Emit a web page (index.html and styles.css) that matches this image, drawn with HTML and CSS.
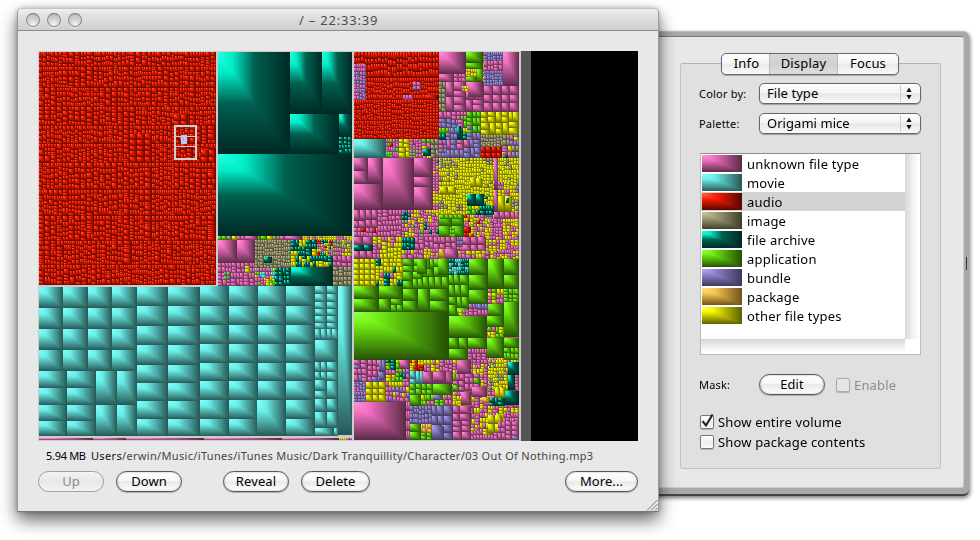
FILE: index.html
```html
<!DOCTYPE html>
<html lang="en">
<head>
<meta charset="utf-8">
<title>/ – 22:33:39</title>
<link rel="stylesheet" href="styles.css">
</head>
<body>
<aside class="drawer">
  <div class="drawer-face">
    <div class="group">
      <div class="tabs"><span class="tab">Info</span><span class="tab tab-on">Display</span><span class="tab">Focus</span></div>
      <div class="field"><label class="small">Color by:</label><div class="popup">File type<svg class="arrows" viewBox="0 0 6 12"><path d="M3 0L5.6 4.5H.4zM3 12L.4 7.5h5.2z"/></svg></div></div>
      <div class="field"><label class="small">Palette:</label><div class="popup">Origami mice<svg class="arrows" viewBox="0 0 6 12"><path d="M3 0L5.6 4.5H.4zM3 12L.4 7.5h5.2z"/></svg></div></div>
      <div class="list">
        <div class="rows">
          <div class="row"><canvas class="swatch" width="40" height="17" data-kind="p"></canvas><span>unknown file type</span></div>
          <div class="row"><canvas class="swatch" width="40" height="17" data-kind="m"></canvas><span>movie</span></div>
          <div class="row row-on"><canvas class="swatch" width="40" height="17" data-kind="r"></canvas><span>audio</span></div>
          <div class="row"><canvas class="swatch" width="40" height="17" data-kind="i"></canvas><span>image</span></div>
          <div class="row"><canvas class="swatch" width="40" height="17" data-kind="a"></canvas><span>file archive</span></div>
          <div class="row"><canvas class="swatch" width="40" height="17" data-kind="g"></canvas><span>application</span></div>
          <div class="row"><canvas class="swatch" width="40" height="17" data-kind="b"></canvas><span>bundle</span></div>
          <div class="row"><canvas class="swatch" width="40" height="17" data-kind="k"></canvas><span>package</span></div>
          <div class="row"><canvas class="swatch" width="40" height="17" data-kind="y"></canvas><span>other file types</span></div>
        </div>
        <div class="scroll-v"></div>
        <div class="scroll-h"></div>
        <div class="corner"></div>
      </div>
      <div class="field mask"><label class="small">Mask:</label><span class="btn">Edit</span><span class="box box-off"></span><span class="check-label off">Enable</span></div>
      <div class="check"><span class="box"><svg class="tick" viewBox="0 0 14 16"><path d="M2.6 8.2l3.4 4.3L12.6 1.5"/></svg></span><span class="check-label">Show entire volume</span></div>
      <div class="check"><span class="box"></span><span class="check-label">Show package contents</span></div>
    </div>
  </div>
  <div class="grip"></div>
</aside>
<main class="window">
  <header class="titlebar"><div class="lights"><i></i><i></i><i></i></div><span class="title">/ – 22:33:39</span></header>
  <section class="content">
    <canvas id="map" class="map" width="600" height="390"></canvas>
    <div class="status"><span class="size">5.94 MB</span><span class="path"><b>Users</b>/erwin/Music/iTunes/iTunes Music/Dark Tranquillity/Character/03 Out Of Nothing.mp3</span></div>
    <div class="actions"><span class="btn btn-off">Up</span><span class="btn">Down</span><span class="btn gap">Reveal</span><span class="btn delete">Delete</span><span class="btn more">More...</span></div>
  </section>
  <svg class="resize" viewBox="0 0 12 12"><path d="M1 11.5L11.5 1M5 11.5L11.5 5M9 11.5L11.5 9"/></svg>
</main>
<script src="map.js"></script>
</body>
</html>
```
FILE: styles.css
```css
* { box-sizing: border-box; }
body { margin: 0; width: 980px; height: 540px; overflow: hidden; position: relative; background: #fff; font: 13px "Noto Sans", "Open Sans", sans-serif; color: #000; }

.window { position: absolute; left: 17px; top: 8px; width: 642px; height: 504px; border: 1px solid #9a9a9a; border-top-color: #c4c4c4; border-bottom-color: #777; border-radius: 5px 5px 0 0; background: #e8e8e8; box-shadow: 0 8px 17px rgba(0,0,0,.6), 0 0 5px rgba(0,0,0,.22); }
.titlebar { height: 22px; border-bottom: 1px solid #8a8a8a; border-radius: 4px 4px 0 0; background: linear-gradient(#f0f0f0, #e2e2e2 30%, #cfcfcf); display: flex; align-items: center; position: relative; }
.lights { display: flex; gap: 7px; padding-left: 8px; }
.lights i { width: 14px; height: 14px; border-radius: 50%; border: 1px solid #8b8b8b; border-top-color: #777; background: radial-gradient(circle at 50% 90%, #f4f4f4, #d4d4d4 45%, #b4b4b4); box-shadow: 0 1px 0 #eee; }
.title { margin-left: 217px; color: #4c4c4c; letter-spacing: .8px; line-height: 20px; }
.content { padding: 20px 20px 0; }
.map { display: block; width: 600px; height: 390px; }
.status { display: flex; height: 30px; padding-left: 8px; font-size: 11px; line-height: 29px; white-space: nowrap; }
.size { width: 45px; letter-spacing: -.3px; }
.path { color: #444; letter-spacing: .33px; }
.path b { font-weight: 400; color: #111; }
.actions { display: flex; gap: 12px; }
.btn { width: 66px; height: 21px; border: 1px solid #555; border-radius: 11px; background: linear-gradient(#fff, #f7f7f7 45%, #e9e9e9 52%, #fff); text-align: center; line-height: 18px; box-shadow: 0 1px 1px rgba(0,0,0,.25), inset 0 0 2px rgba(0,0,0,.35); letter-spacing: .1px; }
.btn-off { color: #8c8c8c; border-color: #a0a0a0; background: linear-gradient(#f3f3f3, #e8e8e8 50%, #f3f3f3); box-shadow: none; }
.gap { margin-left: 29px; }
.delete { width: 69px; }
.more { width: 73px; margin-left: auto; }
.resize { position: absolute; right: 0; bottom: 0; width: 12px; height: 12px; fill: none; stroke: #777; }

.drawer { position: absolute; left: 640px; top: 31px; width: 329px; height: 465px; padding: 4px 5px 6px 0; border-radius: 0 6px 6px 0; background: #a8a8a8; border-top: 1px solid #bbb; border-bottom: 2px solid #444; box-shadow: 1px 2px 4px rgba(0,0,0,.55); }
.drawer-face { height: 100%; padding: 26px 23px 0 40px; background: #e8e8e8; border: 1px solid #777; border-left: 0; border-bottom-color: #ccc; border-right-color: #ccc; border-radius: 0 3px 3px 0; }
.group { height: 406px; width: 261px; border: 1px solid #c2c2c2; border-top-color: #b4b4b4; border-radius: 3px; background: #e0e0e0; padding: 0 19px; }
.tabs { display: flex; width: 178px; height: 22px; margin: -11px 0 8px 21px; border: 1px solid #666; border-radius: 5px; overflow: hidden; background: linear-gradient(#fff, #f5f5f5 45%, #e9e9e9 52%, #fafafa); box-shadow: 0 1px 1px rgba(0,0,0,.25); }
.tab { flex: 1; text-align: center; line-height: 18px; letter-spacing: .2px; }
.tab:first-child { flex: 0 0 47px; padding-left: 2px; }
.tab-on { flex: 0 0 69px; border: solid #bbb; border-width: 0 1px; background: linear-gradient(#d8d8d8, #d0d0d0 50%, #ddd); }
.field { display: flex; height: 21px; margin-bottom: 9px; align-items: center; }
.small { font-size: 11px; width: 59px; margin-left: -1px; letter-spacing: .2px; }
.popup { position: relative; width: 162px; height: 21px; margin-left: 1px; padding-left: 7px; border: 1px solid #666; border-radius: 5px; background: linear-gradient(#fff, #f4f4f4 45%, #e6e6e6 52%, #fafafa); line-height: 18px; letter-spacing: .05px; box-shadow: 0 1px 1px rgba(0,0,0,.3); }
.popup::after { content: ""; position: absolute; right: 19px; top: 1px; bottom: 1px; width: 1px; background: #ccc; }
.arrows { position: absolute; right: 8px; top: 3px; width: 6px; height: 13px; fill: #111; }
.list { display: grid; grid-template: 185px 15px / 204px 15px; width: 221px; height: 202px; margin-top: 19px; border: 1px solid #bbb; border-top-color: #8c8c8c; background: #fff; }
.row { height: 19px; display: flex; align-items: center; gap: 5px; padding-left: 1px; letter-spacing: .2px; }
.row-on { background: #d3d3d3; }
.row span { line-height: 17px; padding-top: 2px; }
.swatch { width: 40px; height: 17px; display: block; }
.scroll-v { background: linear-gradient(90deg, #d8d8d8, #f6f6f6 60%, #fff); }
.scroll-h { background: linear-gradient(#d5d5d5, #f4f4f4 60%, #fff); }
.corner { background: #fff; }
.mask { margin: 19px 0 20px; }
.mask .btn { margin-left: 1px; }
.box { position: relative; width: 14px; height: 14px; border: 1px solid #777; border-radius: 2px; background: linear-gradient(#fff, #eee 50%, #fafafa); box-shadow: 0 1px 1px rgba(0,0,0,.2); }
.box-off { margin-left: 11px; border-color: #aaa; background: #e5e5e5; }
.tick { position: absolute; left: -1px; top: -3px; width: 14px; height: 16px; fill: none; stroke: #222; stroke-width: 2.1; }
.check { display: flex; align-items: center; height: 20px; position: relative; top: -3px; }
.check-label { margin-left: 4px; letter-spacing: .16px; line-height: 18px; }
.off { color: #8c8c8c; }
.grip { position: absolute; right: 2px; top: 225px; width: 1px; height: 13px; background: #333; }
```
FILE: map.js
```js
// Each kind has a ramp of [position, r, g, b] stops, lit from the top left.
const ramps = {
  p: [[0,255,146,214],[.3,240,110,190],[1,88,42,70]],
  m: [[0,130,255,255],[.3,108,238,232],[1,38,86,84]],
  r: [[0,255,100,76],[.35,250,28,0],[1,84,6,0]],
  i: [[0,204,204,160],[.35,160,156,118],[1,62,60,44]],
  a: [[0,36,255,226],[.2,0,236,198],[.5,0,96,80],[1,0,40,35]],
  g: [[0,150,255,76],[.25,114,240,20],[1,36,78,4]],
  b: [[0,186,170,246],[.3,146,132,206],[1,62,54,90]],
  k: [[0,255,220,130],[.3,250,200,84],[1,110,80,28]],
  y: [[0,255,255,90],[.28,246,246,0],[1,92,92,0]]
};
const luts = {};
for (const k in ramps) {
  const s = ramps[k];
  luts[k] = Array.from({length: 101}, (_, n) => {
    const t = n / 100;
    let j = 1;
    while (s[j][0] < t) j++;
    const a = s[j - 1], b = s[j], f = (t - a[0]) / (b[0] - a[0]);
    return [1, 2, 3].map(c => a[c] + (b[c] - a[c]) * f);
  });
}
function shade(img, kind, x, y, w, h) {
  for (let j = 0; j < h; j++) for (let i = 0; i < w; i++) {
    const X = x + i, Y = y + j;
    if (X < 0 || Y < 0 || X >= img.width || Y >= img.height) continue;
    const c = luts[kind][Math.round(100 * Math.max((i + .3) / w, (j + .3) / h))];
    const o = (Y * img.width + X) * 4;
    img.data[o] = c[0]; img.data[o + 1] = c[1]; img.data[o + 2] = c[2]; img.data[o + 3] = 255;
  }
}
document.querySelectorAll('.swatch').forEach(c => {
  const g = c.getContext('2d'), im = g.createImageData(40, 17);
  shade(im, c.dataset.kind, 0, 0, 40, 17);
  g.putImageData(im, 0, 0);
});

const OX = 38, OY = 51;
const ctx = document.getElementById('map').getContext('2d');
const img = ctx.createImageData(600, 390);
let seed = 7;
const rnd = () => (seed = (seed * 16807) % 2147483647) / 2147483647;
// One file: kind, left, top, right, bottom.
const tile = (k, x, y, r, b) => shade(img, k, x - OX, y - OY, r - x, b - y);
// A folder: divided until its parts are about `cell` wide; `ratio` > 1 favours tall parts.
function folder(mix, x, y, r, b, cell, ratio = 1, kind = null) {
  const w = r - x, h = b - y;
  if (!kind && w * h < cell * cell * 5) kind = mix[Math.floor(rnd() * mix.length)];
  if (kind && rnd() < .25) kind = mix[Math.floor(rnd() * mix.length)];
  if ((w * h <= cell * cell * 1.5 && w < cell * 2.2 && h < cell * ratio * 2.2) || (w < 3 && h < 3)) {
    tile(kind || mix[0], x, y, r, b);
    return;
  }
  const f = .4 + rnd() * .2;
  if (w * ratio >= h && w > 1) {
    const m = x + Math.max(1, Math.round(w * f));
    folder(mix, x, y, m, b, cell, ratio, kind); folder(mix, m, y, r, b, cell, ratio, kind);
  } else {
    const m = y + Math.max(1, Math.round(h * f));
    folder(mix, x, y, r, m, cell, ratio, kind); folder(mix, x, m, r, b, cell, ratio, kind);
  }
}
// Files of like size in rows and columns.
function rack(k, x, y, r, b, cw, ch) {
  const nx = Math.max(1, Math.round((r - x) / cw)), ny = Math.max(1, Math.round((b - y) / ch));
  const at = (p, q, n, i) => Math.round(p + (q - p) * i / n);
  for (let i = 0; i < nx; i++) for (let j = 0; j < ny; j++)
    tile(k, at(x, r, nx, i), at(y, b, ny, j), at(x, r, nx, i + 1), at(y, b, ny, j + 1));
}
function steps(k, xs, ys) {
  for (let i = 0; i + 1 < xs.length; i++) for (let j = 0; j + 1 < ys.length; j++)
    tile(k, xs[i], ys[j], xs[i + 1], ys[j + 1]);
}

// Music: albums of tracks, in columns that share their width
function album(x, y, r, b) {
  const w = 4 + Math.floor(rnd() * 3);
  for (let c = x; c < r;) {
    const e = r - c < w + 3 ? r : c + w;
    for (let t = y; t < b;) {
      let f = t + 4 + Math.floor(rnd() * 3);
      if (b - f < 3) f = b;
      const p = rnd();
      if (p < .42 && e - c > 3) {
        const m = c + Math.round((e - c) / 2);
        tile('r', c, t, m, f); tile('r', m, t, e, f);
      } else if (p < .55 && f - t > 3) {
        const m = t + Math.round((f - t) / 2);
        tile('r', c, t, e, m); tile('r', c, m, e, f);
      } else tile('r', c, t, e, f);
      t = f;
    }
    c = e;
  }
}
for (const [xs, ys] of [
  [[39,63,94,130,152,175,196,216], [52,67,88,107,126,144,163,190,216,241]],
  [[39,64,92,112,132,155,177,196,216], [241,265,285]]])
  for (let i = 0; i + 1 < xs.length; i++) for (let j = 0; j + 1 < ys.length; j++)
    album(xs[i], ys[j], xs[i + 1], ys[j + 1]);
rack('r',130,134,152,163,8,6); rack('r',201,150,216,163,7,6); rack('r',174,115,188,126,7,5);

// Loose files behind the larger folders
folder('pyipb',218,236,352,286,3); folder('ppyyb',354,52,519,440,3);

// Archives
[['a',218,52,290,154],['a',290,52,322,114],['a',322,52,352,114],['a',290,114,339,154],['a',339,114,352,137],['a',218,154,352,236]].forEach(t => tile(...t));
folder('aaaaap', 339,137,352,154,4);
folder('pyypig', 218,236,300,240,4);
folder('yyyyyp', 300,236,352,240,2);
tile('p',245,236,258,240); tile('p',286,236,302,240);
tile('p',218,240,237,263); tile('p',237,240,255,263);
folder('iiiii', 255,240,291,268,3,1.4);
tile('a',264,257,272,263);
folder('aaaay', 291,240,317,256,4); folder('yaya', 291,256,333,267,4);
folder('yapayir', 317,240,333,256,2); folder('iiyp',333,240,352,256,3,1.4);
folder('p',333,256,352,267,5);
folder('ppppppppy', 218,263,255,286,4); folder('yybg', 224,272,230,280,3);
folder('ympgpy', 255,268,275,286,3); folder('aaaag', 275,268,291,286,4);
tile('a',291,267,333,286); folder('i',333,267,352,286,4);

// Movies
steps('m',[39,63,88,112,137],[287,308,329,350,371]);
steps('m',[39,67,96],[371,388,405,421,436]);
steps('m',[96,117,137],[371,405,436]);
steps('m',[137,168,200],[287,306,326,345,365,383,401,419,436]);
steps('m',[200,229,258,286,315],[286,306,325,344,363,381,400,419,436]);
tile('m',257,400,286,436);
steps('m',[315,327,338],[286,294,302,309,316,323,329]);
steps('m',[315,321,327,332,338],[329,340]);
tile('m',315,340,338,362);
steps('m',[315,321,327],[362,372,380]); steps('m',[327,338],[362,372,381,399,412]);
steps('m',[315,327],[380,391,399,412]);
steps('m',[315,327,338],[412,428]); tile('m',315,428,334,436); tile('m',334,428,338,436);
tile('m',338,286,352,435);
steps('p',[39,93,126,204,282,339],[438,440]); folder('yypi',339,438,352,440,2);

// Right column, top
folder('r',354,52,439,78,4,2.4); folder('r',354,78,439,100,3,2); folder('r',354,100,439,139,3,1.5);
folder('ppb',354,64,366,100,3); folder('pb',413,82,421,90,4); folder('pb',403,95,413,100,4,2);
tile('r',425,95,439,100);
tile('m',354,139,386,158);
folder('pppgbr',386,139,399,158,3,1.5); folder('y',399,139,410,158,5); folder('pppi',410,139,422,158,3);
folder('gpy',422,139,431,149,4); tile('a',423,149,431,156); folder('i',431,139,439,158,4);
tile('p',439,52,466,74); tile('g',466,52,483,63); tile('g',466,63,483,69); tile('g',477,69,483,82); folder('yyk',466,69,477,77,3); tile('g',466,77,477,82);
folder('b',484,52,503,61,3); folder('p',484,61,503,71,4); folder('b',484,71,503,86,3); tile('p',503,52,519,86);
tile('p',439,74,454,82); folder('p',454,74,466,82,4); folder('i',439,82,446,112,4,1.4);
folder('p',446,82,484,112,9); tile('p',468,82,483,97); folder('yp',462,86,468,92,2); rack('p',484,86,519,112,9,9);
folder('bbbbp',439,112,452,128,5); folder('ppbpg',452,112,481,128,4); folder('bbbgpay',439,128,468,140,4); folder('gggb',467,112,481,140,5);
tile('a',457,126,461,140);
folder('y',481,112,519,135,7); folder('ppb',439,140,447,158,4); folder('bbbbbp',447,140,481,158,6);
folder('i',481,135,503,147,3); rack('r',481,147,502,158,5,5); folder('pgbyapi',503,135,519,158,4);

// Right column, upper middle
[['p',354,158,368,171],['p',354,171,368,184],['p',368,158,383,184],['p',354,184,383,210],['p',383,158,414,210],['p',414,158,433,177],['p',414,177,433,187],['p',414,187,433,210]].forEach(t=>tile(...t));
folder('pppya',433,158,439,210,3);
folder('yyyyyyyi',439,158,519,215,3,1.4);
folder('yi',440,158,460,168,2); rack('y',470,178,482,187,6,9); rack('y',440,187,456,194,8,7);
rack('a',467,194,484,206,8,12); folder('aaayg',467,206,494,215,4); folder('aay',484,197,494,206,3);
tile('p',494,158,498,190); tile('p',494,190,498,212); folder('iiyp',498,182,510,196,3); rack('y',498,196,512,212,7,16); tile('a',506,198,509,203);
folder('p',494,212,519,226,6);
folder('p',354,210,378,228,7); folder('p',378,210,402,237,4); folder('aapmy',402,210,414,220,3); folder('pypi',402,220,424,237,3);
folder('ppy',414,210,432,223,3); folder('yyp',432,210,439,223,3); folder('aapp',424,223,439,237,3);
folder('ppppr',354,228,378,237,4); folder('p',354,237,373,245,8); rack('a',354,245,373,251,9,6); rack('p',354,251,373,259,6,8);
folder('yyyyp',373,237,402,259,4); folder('aaam',402,238,415,250,4,1.5); folder('ppyp',402,250,424,259,4); folder('p',415,237,457,250,5);
folder('pypy',424,249,439,259,3); rack('g',439,215,464,237,12,12); rack('g',440,215,463,219,5,4); rack('g',450,227,455,237,2,4);
folder('ypiypr',464,215,485,237,3); tile('r',464,227,471,233);
folder('yyppp',485,219,519,259,3); folder('b',457,237,463,245,3); rack('p',463,237,486,252,7,7);
folder('ppyp',457,251,490,259,4); tile('k',439,249,445,258); tile('p',445,249,458,259);

// Applications
rack('y',354,259,376,286,6,5); folder('yyyyypa',376,259,403,286,4); folder('g',403,259,449,289,8);
tile('g',417,259,427,274); tile('g',438,259,449,275); folder('aaaam',449,259,469,275,3,1.3);
[[469,259,488,275],[488,259,504,289],[504,259,519,275],[504,275,519,289],[354,286,379,299],[379,286,403,299],[354,299,379,312],[379,299,391,312],[391,299,403,305],[391,305,397,312],[397,305,403,312],[403,289,418,301],[403,301,418,312],[418,289,430,312],[430,289,449,301],[430,301,449,312],[354,312,449,360],[469,275,488,290],[469,290,488,304],[488,304,504,316],[449,316,487,338],[487,316,504,327],[504,302,519,337],[449,338,459,349],[459,338,468,349],[468,338,487,349],[449,349,468,360],[487,338,504,358],[504,338,519,348]].forEach(a=>tile('g',...a));
folder('g',449,275,469,316,8); folder('yppg',488,289,504,304,4); folder('gggy',504,289,519,302,4);
folder('bbp',469,304,488,316,4); folder('pyb',459,310,469,316,3); folder('pygp',488,327,504,338,4);
folder('ppg',468,349,487,360,4); folder('g',504,348,519,360,5); folder('bpy',487,358,504,361,2);

// Right column, bottom
folder('ppppb',354,360,386,382,5); folder('bp',379,360,385,380,6,3); folder('pybpga',386,360,410,382,4); tile('p',400,360,410,369);
folder('rpypy',410,360,424,371,3); folder('ppppyg',424,360,453,372,4); folder('m',410,371,423,384,6,2); rack('p',423,372,453,384,10,12); tile('p',434,372,446,382);
folder('bbbp',354,382,366,402,3); rack('y',366,382,386,402,6,6); folder('pppbyp',386,382,410,402,4);
folder('g',410,384,433,395,5); tile('g',433,384,452,395); tile('g',410,395,421,406); folder('ggyp',421,395,452,406,4); tile('b',433,395,443,400);
tile('p',354,402,406,440); folder('p',406,402,410,440,4,4);
folder('b',410,406,432,424,4,1.5); folder('b',432,406,453,440,8); tile('b',432,426,444,440);
rack('g',410,424,421,440,11,8); folder('k',421,424,432,433,4,2); folder('ggy',421,433,432,440,4);
folder('pppyy',453,360,519,440,3.5); folder('pppg',453,374,480,391,5); folder('p',453,406,471,440,8);
tile('p',457,360,471,374); folder('yyyyi',489,360,508,390,3); tile('a',508,362,519,375); tile('a',508,375,515,390); tile('a',505,391,519,405);
rack('y',495,388,505,398,5,10); tile('p',472,387,487,397); folder('aag',490,398,505,406,5); tile('k',482,397,490,403);
rack('y',488,415,502,433,7,9); folder('ppbp',498,422,519,440,5); tile('p',461,392,471,405);

ctx.fillStyle = '#ccc'; ctx.fillRect(0, 0, 483, 390);
ctx.fillStyle = '#555'; ctx.fillRect(483, 0, 10, 390);
ctx.fillStyle = '#000'; ctx.fillRect(493, 0, 107, 390);
for (let p = 0; p < img.width * img.height; p++) {
  if (img.data[p * 4 + 3]) {
    ctx.fillStyle = `rgb(${img.data[p*4]},${img.data[p*4+1]},${img.data[p*4+2]})`;
    ctx.fillRect(p % 600, Math.floor(p / 600), 1, 1);
  }
}
// Path of enclosing folders around the selected file
ctx.strokeStyle = '#d0d0d0'; ctx.lineWidth = 2;
ctx.strokeRect(137, 75, 21, 33);
ctx.fillStyle = '#d0d0d0';
ctx.fillRect(138, 85, 20, 1); ctx.fillRect(138, 95, 20, 1);
ctx.fillStyle = '#b4cdf8'; ctx.fillRect(143, 84, 6, 9);
ctx.fillStyle = '#90a8e0'; ctx.fillRect(145, 87, 1, 3);
```
